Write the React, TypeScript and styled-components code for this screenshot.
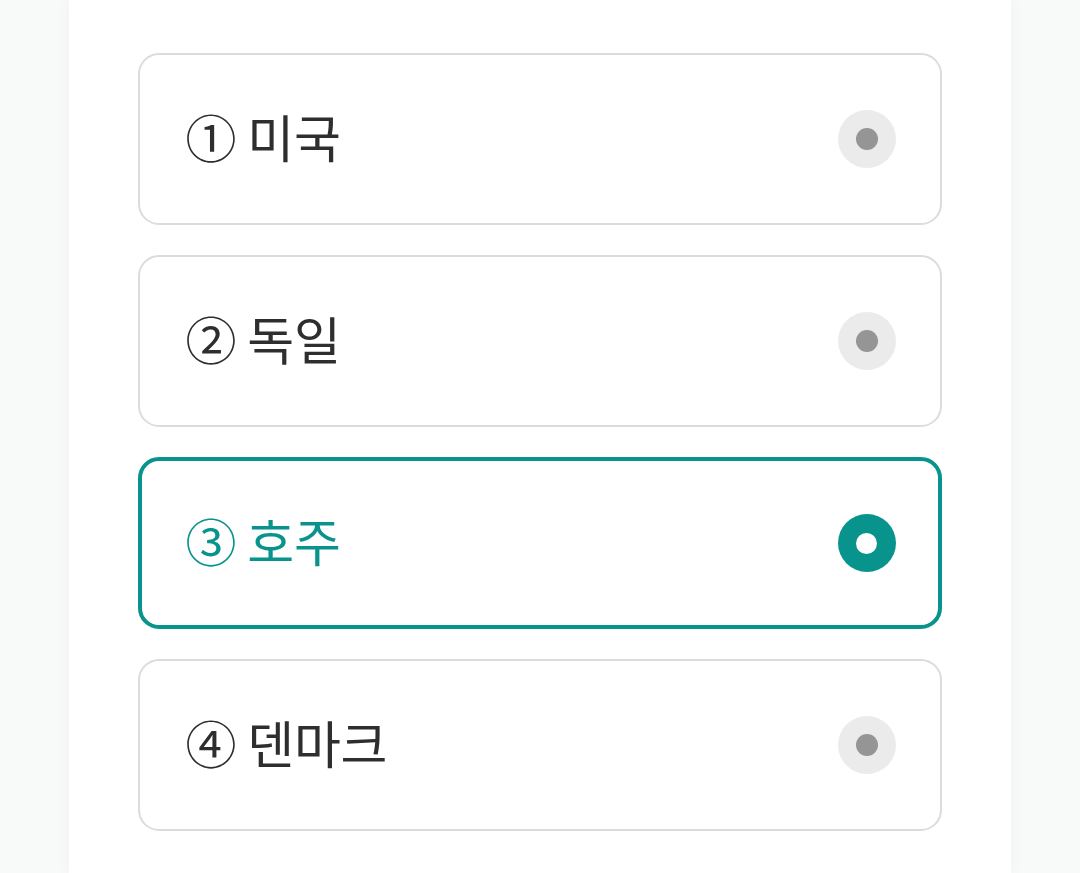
import React, { useState } from "react";
import styled, { createGlobalStyle, css } from "styled-components";

const GlobalStyle = createGlobalStyle`
  html, body {
    margin: 0;
    padding: 0;
    height: 100%;
    background: #f8f9f9;
    font-family: "Noto Sans CJK KR", "Noto Sans", sans-serif;
  }
  #root { min-height: 100%; }
`;

const Page = styled.div`
  display: flex;
  justify-content: center;
  min-height: 100vh;
`;

const Panel = styled.div`
  width: 942px;
  margin-left: -1px;
  background: #ffffff;
  box-shadow: 0 0 16px rgba(0, 0, 0, 0.035);
  padding: 53px 69px 40px;
  box-sizing: border-box;
  display: flex;
  flex-direction: column;
  gap: 30px;
  min-height: 100vh;
`;

const Option = styled.button<{ $selected: boolean }>`
  all: unset;
  box-sizing: border-box;
  height: 172px;
  border-radius: 21px;
  border: 2px solid #dcdcdc;
  background: #fff;
  display: flex;
  align-items: center;
  justify-content: space-between;
  padding: 0 44px 0 46px;
  cursor: pointer;
  ${(p) =>
    p.$selected &&
    css`
      border: 4px solid #08948c;
      padding: 0 42px 0 44px;
    `}
`;

const Label = styled.span<{ $selected: boolean }>`
  font-family: "Noto Sans CJK KR", "Noto Sans", sans-serif;
  font-size: 51px;
  line-height: 1;
  margin-top: -5px;
  color: ${(p) => (p.$selected ? "#08948c" : "#2e2e2e")};
  letter-spacing: -0.3px;
`;

const Radio = styled.span<{ $selected: boolean }>`
  width: 58px;
  height: 58px;
  border-radius: 50%;
  display: flex;
  align-items: center;
  justify-content: center;
  background: ${(p) => (p.$selected ? "#08948c" : "#ebebeb")};
`;

const Dot = styled.span<{ $selected: boolean }>`
  width: ${(p) => (p.$selected ? "21px" : "22px")};
  height: ${(p) => (p.$selected ? "21px" : "22px")};
  border-radius: 50%;
  background: ${(p) => (p.$selected ? "#ffffff" : "#959595")};
`;

const options = ["① 미국", "② 독일", "③ 호주", "④ 덴마크"];

export default function App() {
  const [selected, setSelected] = useState(2);
  return (
    <>
      <GlobalStyle />
      <Page>
        <Panel>
          {options.map((o, i) => (
            <Option key={o} $selected={selected === i} onClick={() => setSelected(i)}>
              <Label $selected={selected === i}>{o}</Label>
              <Radio $selected={selected === i}>
                <Dot $selected={selected === i} />
              </Radio>
            </Option>
          ))}
        </Panel>
      </Page>
    </>
  );
}
